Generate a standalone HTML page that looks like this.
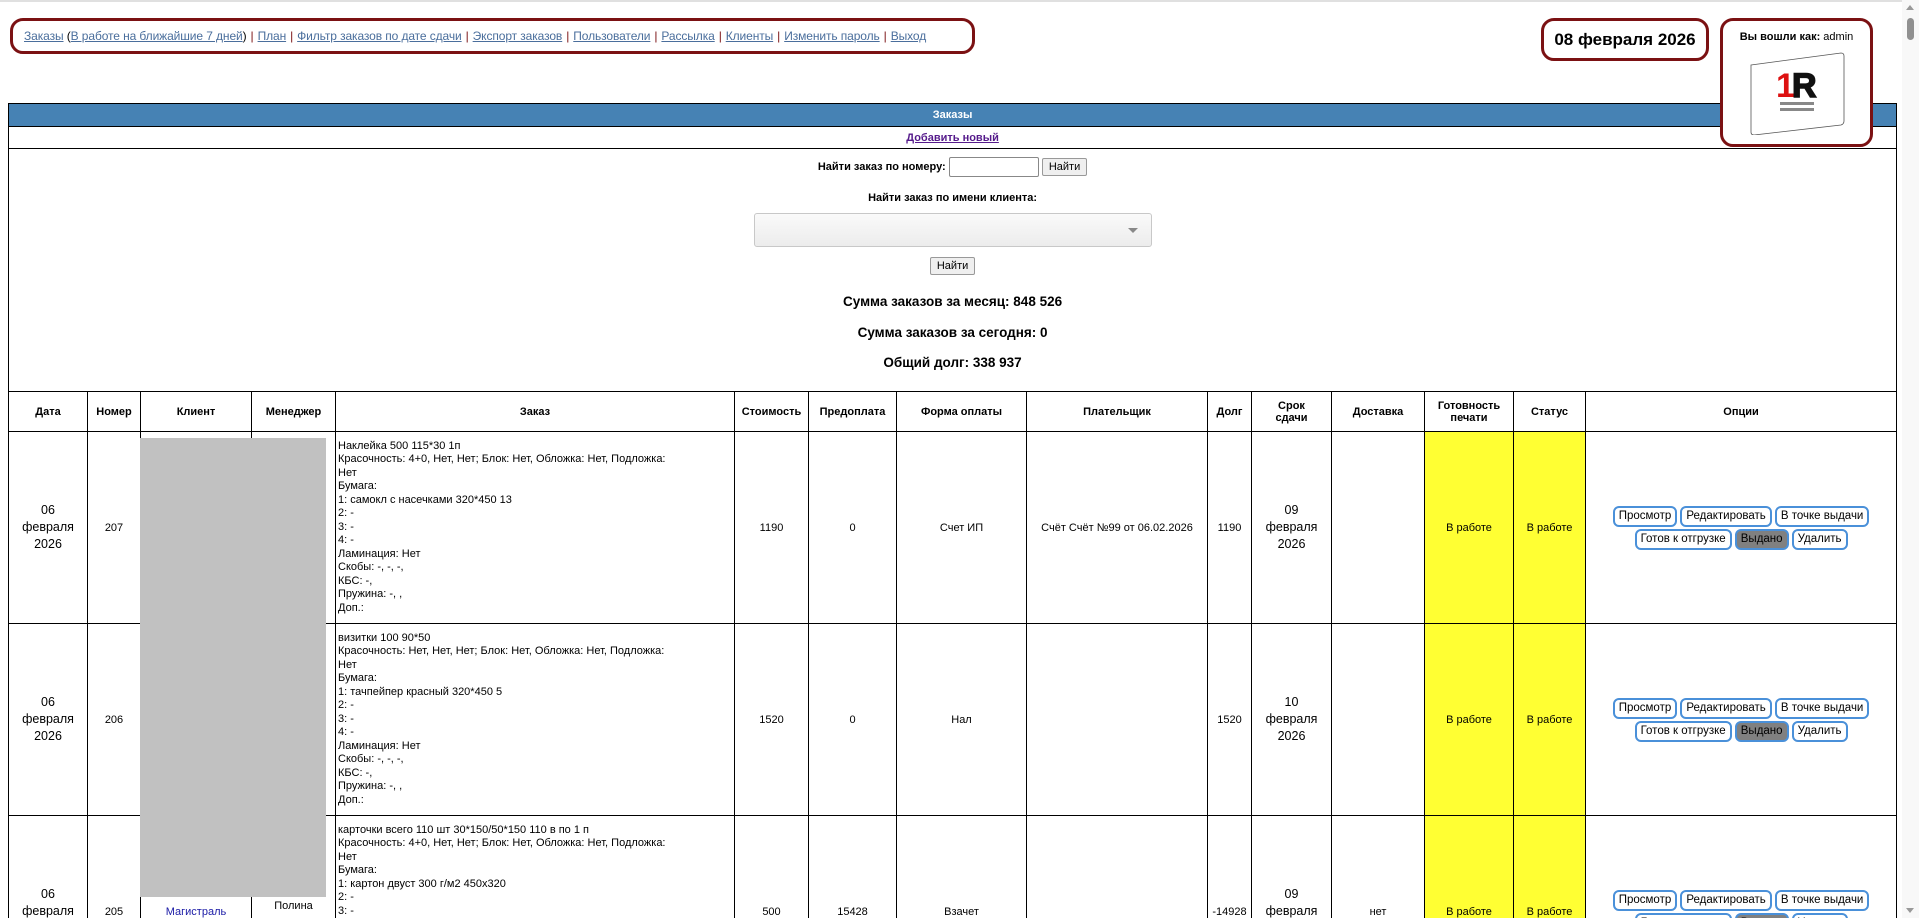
<!DOCTYPE html>
<html><head><meta charset="utf-8">
<style>
html,body{margin:0;padding:0;background:#fff;overflow:hidden;width:1919px;height:918px}
body{font-family:"Liberation Sans","DejaVu Sans",sans-serif;font-size:11px;color:#000;position:relative}
.topline{position:absolute;left:0;top:0;width:1902px;height:2px;background:#e0e0e0}
.nav{position:absolute;left:10px;top:18px;width:965px;height:36px;border:3px solid #7b1113;border-radius:13px;box-sizing:border-box;font-size:12px;line-height:30px;padding-left:11px;white-space:nowrap;letter-spacing:-0.1px}
.nav a{color:#4a6e9c;text-decoration:underline}
.nav .s{color:#7b1113;margin:0 4px}
.date{position:absolute;left:1541px;top:18px;width:168px;height:43px;border:3px solid #7b1113;border-radius:13px;box-sizing:border-box;font-weight:bold;font-size:17px;text-align:center;line-height:37px}
.login{position:absolute;left:1720px;top:18px;width:153px;height:129px;border:3px solid #7b1113;border-radius:13px;box-sizing:border-box;background:#fff;z-index:3;text-align:center;font-size:11px;padding-top:10px}
.card{position:absolute;left:25px;top:30px;width:98px;height:84px}
table.m{position:absolute;left:8px;top:103px;width:1888px;border-collapse:collapse;table-layout:fixed}
table.m td,table.m th{border:1px solid #000;padding:0 2px;text-align:center;vertical-align:middle;overflow:hidden}
.bar{background:#4682b4;color:#fff;font-weight:bold;height:22px}
.add a{color:#551a8b;font-weight:bold;text-decoration:underline}
th{font-weight:bold;font-size:11px}
td.z{text-align:left!important;line-height:13.5px;vertical-align:middle}
.y{background:#ffff33}
.d{font-size:12.5px;line-height:17px}
.b{display:inline-block;border:2px solid #4a90d9;border-radius:6px;padding:2px 4px;margin:1px 0;background:#fff;font-size:11.5px;line-height:13px}
.b.g{background:#808080}
.btn{display:inline-block;border:1px solid #999;border-radius:2px;background:#efefef;padding:2px 6px;font-size:11px}
.inp{display:inline-block;width:88px;height:18px;border:1px solid #888;border-radius:2px;vertical-align:middle}
.gray{position:absolute;left:140px;top:438px;width:186px;height:459px;background:#c1c1c1;z-index:2}
.sb{position:absolute;left:1902px;top:0;width:17px;height:918px;background:#f8f8f8}
.sum{position:absolute;left:0;right:0;font-weight:bold;font-size:13.5px}
</style></head><body>
<div class="topline"></div>
<div class="nav"><a>Заказы</a> (<a>В работе на ближайшие 7 дней</a>)<span class="s">|</span><a>План</a><span class="s">|</span><a>Фильтр заказов по дате сдачи</a><span class="s">|</span><a>Экспорт заказов</a><span class="s">|</span><a>Пользователи</a><span class="s">|</span><a>Рассылка</a><span class="s">|</span><a>Клиенты</a><span class="s">|</span><a>Изменить пароль</a><span class="s">|</span><a>Выход</a></div>
<div class="date">08 февраля 2026</div>
<div class="login"><b>Вы вошли как:</b> admin
<svg class="card" viewBox="0 0 98 84"><path d="M3 14 L93 2 Q96 2 96 5 L96 70 Q96 73 93 74 L6 84 Q3 84 3 81 Z" fill="#fff" stroke="#555" stroke-width="0.8"/>
<text x="28" y="46" font-family="Liberation Sans" font-weight="bold" font-size="34" fill="#d11">1</text><text x="44" y="46" font-family="Liberation Sans" font-weight="bold" font-size="34" fill="#111" stroke="#111" stroke-width="1.5">R</text>
<rect x="32" y="51" width="34" height="3" fill="#888"/><rect x="32" y="57" width="34" height="3" fill="#888"/></svg></div>

<div class="gray"></div>
<table class="m">
<colgroup><col style="width:79px"><col style="width:53px"><col style="width:111px"><col style="width:84px"><col style="width:399px"><col style="width:74px"><col style="width:88px"><col style="width:130px"><col style="width:181px"><col style="width:44px"><col style="width:80px"><col style="width:93px"><col style="width:89px"><col style="width:72px"><col style="width:311px"></colgroup>
<tr><td colspan="15" class="bar">Заказы</td></tr>
<tr><td colspan="15" class="add" style="height:21px"><a>Добавить новый</a></td></tr>
<tr><td colspan="15" style="height:242px;vertical-align:top;padding:0;position:relative">
<div style="position:absolute;left:0;right:0;top:8px"><b>Найти заказ по номеру:</b> <span class="inp"></span> <span class="btn">Найти</span></div>
<div style="position:absolute;left:0;right:0;top:43px"><b>Найти заказ по имени клиента:</b></div>
<div style="position:absolute;left:745px;top:64px;width:398px;height:34px;border:1px solid #c8c8c8;border-radius:3px;background:linear-gradient(#fafafa,#ececec);box-sizing:border-box"><div style="position:absolute;right:13px;top:14px;width:0;height:0;border-left:5px solid transparent;border-right:5px solid transparent;border-top:5px solid #888"></div></div>
<div style="position:absolute;left:0;right:0;top:108px"><span class="btn">Найти</span></div>
<div class="sum" style="top:145px">Сумма заказов за месяц: 848 526</div>
<div class="sum" style="top:176px">Сумма заказов за сегодня: 0</div>
<div class="sum" style="top:206px">Общий долг: 338 937</div>
</td></tr>
<tr style="height:40px"><th>Дата</th><th>Номер</th><th>Клиент</th><th>Менеджер</th><th>Заказ</th><th>Стоимость</th><th>Предоплата</th><th>Форма оплаты</th><th>Плательщик</th><th>Долг</th><th>Срок<br>сдачи</th><th>Доставка</th><th>Готовность<br>печати</th><th>Статус</th><th>Опции</th></tr>
<tr style="height:192px"><td class="d">06<br>февраля<br>2026</td><td>207</td><td></td><td></td>
<td class="z">Наклейка 500 115*30 1п<br>Красочность: 4+0, Нет, Нет; Блок: Нет, Обложка: Нет, Подложка:<br>Нет<br>Бумага:<br>1: самокл с насечками 320*450 13<br>2: -<br>3: -<br>4: -<br>Ламинация: Нет<br>Скобы: -, -, -,<br>КБС: -,<br>Пружина: -, ,<br>Доп.:</td>
<td>1190</td><td>0</td><td>Счет ИП</td><td>Счёт Счёт №99 от 06.02.2026</td><td>1190</td><td class="d">09<br>февраля<br>2026</td><td></td><td class="y">В работе</td><td class="y">В работе</td>
<td><span class="b">Просмотр</span> <span class="b">Редактировать</span> <span class="b">В точке выдачи</span><br><span class="b">Готов к отгрузке</span> <span class="b g">Выдано</span> <span class="b">Удалить</span></td></tr>
<tr style="height:192px"><td class="d">06<br>февраля<br>2026</td><td>206</td><td></td><td></td>
<td class="z">визитки 100 90*50<br>Красочность: Нет, Нет, Нет; Блок: Нет, Обложка: Нет, Подложка:<br>Нет<br>Бумага:<br>1: тачпейпер красный 320*450 5<br>2: -<br>3: -<br>4: -<br>Ламинация: Нет<br>Скобы: -, -, -,<br>КБС: -,<br>Пружина: -, ,<br>Доп.:</td>
<td>1520</td><td>0</td><td>Нал</td><td></td><td>1520</td><td class="d">10<br>февраля<br>2026</td><td></td><td class="y">В работе</td><td class="y">В работе</td>
<td><span class="b">Просмотр</span> <span class="b">Редактировать</span> <span class="b">В точке выдачи</span><br><span class="b">Готов к отгрузке</span> <span class="b g">Выдано</span> <span class="b">Удалить</span></td></tr>
<tr style="height:192px"><td class="d">06<br>февраля<br>2026</td><td>205</td><td style="color:#1a1aa6">Магистраль</td><td>Полина<br>&nbsp;</td>
<td class="z">карточки всего 110 шт 30*150/50*150 110 в по 1 п<br>Красочность: 4+0, Нет, Нет; Блок: Нет, Обложка: Нет, Подложка:<br>Нет<br>Бумага:<br>1: картон двуст 300 г/м2 450x320<br>2: -<br>3: -<br>4: -<br>Ламинация: Нет<br>Скобы: -, -, -,<br>КБС: -,<br>Пружина: -, ,<br>Доп.:</td>
<td>500</td><td>15428</td><td>Взачет</td><td></td><td>-14928</td><td class="d">09<br>февраля<br>2026</td><td>нет</td><td class="y">В работе</td><td class="y">В работе</td>
<td><span class="b">Просмотр</span> <span class="b">Редактировать</span> <span class="b">В точке выдачи</span><br><span class="b">Готов к отгрузке</span> <span class="b g">Выдано</span> <span class="b">Удалить</span></td></tr>
</table>
<div class="sb"><div style="position:absolute;left:4px;top:5px;border-left:4px solid transparent;border-right:4px solid transparent;border-bottom:5px solid #999"></div>
<div style="position:absolute;left:5px;top:18px;width:7px;height:22px;border-radius:4px;background:#909090"></div>
<div style="position:absolute;left:4px;bottom:5px;border-left:4px solid transparent;border-right:4px solid transparent;border-top:5px solid #999"></div></div>
</body></html>
